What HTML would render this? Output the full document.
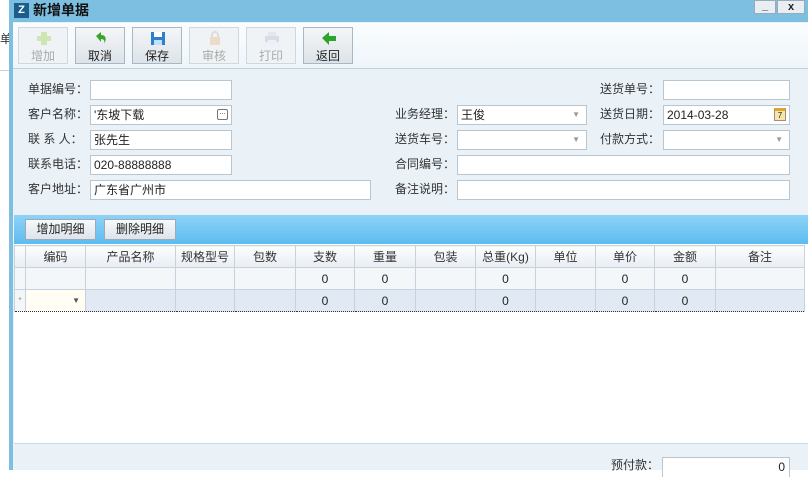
<!DOCTYPE html>
<html><head><meta charset="utf-8"><style>
*{box-sizing:border-box;margin:0;padding:0}
body{width:808px;height:470px;overflow:hidden;background:#fff;font-family:"Liberation Sans","Noto Sans CJK SC",sans-serif;font-size:12px;color:#222;position:relative}
.a{position:absolute}
.win{left:9px;top:0;width:799px;height:470px;background:#7dbfe0}
.title{left:14px;top:0;height:22px;font-weight:bold;font-size:14px;color:#111;line-height:18px}
.body{left:13px;top:22px;width:795px;height:448px;background:#eaf2f8}
.tb{left:13px;top:23px;width:795px;height:46px;background:linear-gradient(#fafdff,#eef5fa);border-bottom:1px solid #b9d3e4}
.btn{top:27px;width:50px;height:37px;border:1px solid #aab8c4;background:linear-gradient(#f4f6f8,#dde3e8);text-align:center;font-size:12px;padding-top:19px}
.dis{color:#aaa;border-color:#d0d8de;background:#f0f3f5}
.ic{position:absolute;left:17px;top:3px;width:16px;height:15px}
.lb{font-size:12px;color:#333;line-height:19px}
.in{height:20px;background:#fff;border:1px solid #b8c6d2;font-size:12px;line-height:18px;padding-left:3px}
.dd::after{content:"▼";position:absolute;right:6px;top:0;font-size:8px;color:#999}
.gt{left:14px;top:215px;width:794px;height:29px;background:linear-gradient(#8fd2f7,#5cbcef)}
.gb{top:219px;height:21px;border:1px solid #9ab;background:linear-gradient(#f7f9fb,#dde4ea);font-size:12px;text-align:center;line-height:19px}
.grid{left:14px;top:244px;width:794px;height:199px;background:#fff}
table{border-collapse:collapse;position:absolute;left:14px;top:245px}
td{border:1px solid #c8d2dc;height:22px;text-align:center;font-size:12px;padding:0}
tr.h td{background:linear-gradient(#fdfdfe,#e8edf2);height:22px;color:#333}
tr.r1 td{background:#f4f7fa}
tr.r2 td{background:#e1eaf4;border-top:1px dotted #333;border-bottom:1px dotted #333}
</style></head><body>
<div class="a" style="left:0;top:30px;font-size:12px;color:#333">单</div>
<div class="a" style="left:0;top:70px;width:9px;height:1px;background:#ccc"></div>
<div class="a win"></div>
<div class="a" style="left:14px;top:3px;width:15px;height:15px;background:#1d5d8e;color:#fff;font-size:11px;font-weight:bold;line-height:15px;text-align:center">Z</div>
<div class="a title" style="left:33px;top:1px">新增单据</div>
<div class="a" style="left:754px;top:0;width:22px;height:14px;background:#e8eef2;border:1px solid #9ab;font-size:11px;text-align:center;line-height:10px;font-weight:bold">_</div>
<div class="a" style="left:777px;top:0;width:28px;height:14px;background:#e8eef2;border:1px solid #9ab;font-size:11px;text-align:center;line-height:12px;font-weight:bold">x</div>
<div class="a body"></div>
<div class="a tb"></div>
<div class="a btn dis" style="left:18px"><svg class="ic" viewBox="0 0 16 15"><path d="M5 1h6v4h4v5h-4v4H5v-4H1V5h4z" fill="#cde6b4"/></svg>增加</div>
<div class="a btn" style="left:75px"><svg class="ic" viewBox="0 0 16 15"><path d="M3 5l5-4v3c5 0 6 4 3 9 1-3 0-5-3-5v3z" fill="#3aa52a"/></svg>取消</div>
<div class="a btn" style="left:132px"><svg class="ic" viewBox="0 0 16 15"><rect x="1" y="1" width="14" height="13" fill="#2f7fcf"/><rect x="4" y="1" width="8" height="5" fill="#fff"/><rect x="4" y="9" width="8" height="5" fill="#bfe0f5"/></svg>保存</div>
<div class="a btn dis" style="left:189px"><svg class="ic" viewBox="0 0 16 15"><rect x="3" y="6" width="10" height="8" fill="#eadcc8"/><path d="M5 6V4a3 3 0 016 0v2" stroke="#ddd" fill="none" stroke-width="2"/></svg>审核</div>
<div class="a btn dis" style="left:246px"><svg class="ic" viewBox="0 0 16 15"><rect x="4" y="1" width="8" height="4" fill="#e4e8ec"/><rect x="1" y="5" width="14" height="6" fill="#d8dde2"/><rect x="4" y="9" width="8" height="5" fill="#eef"/></svg>打印</div>
<div class="a btn" style="left:303px"><svg class="ic" viewBox="0 0 16 15"><path d="M1 7l7-6v4h7v5H8v4z" fill="#2ea52a"/></svg>返回</div>

<div class="a lb" style="left:28px;top:80px">单据编号：</div>
<div class="a in" style="left:90px;top:80px;width:142px"></div>
<div class="a lb" style="left:28px;top:105px">客户名称：</div>
<div class="a in" style="left:90px;top:105px;width:142px">'东坡下载<span style="position:absolute;right:3px;top:3px;width:11px;height:11px;border:1px solid #777;border-radius:2px;font-size:7px;line-height:6px;text-align:center">...</span></div>
<div class="a lb" style="left:28px;top:130px">联 系 人：</div>
<div class="a in" style="left:90px;top:130px;width:142px">张先生</div>
<div class="a lb" style="left:28px;top:155px">联系电话：</div>
<div class="a in" style="left:90px;top:155px;width:142px">020-88888888</div>
<div class="a lb" style="left:28px;top:180px">客户地址：</div>
<div class="a in" style="left:90px;top:180px;width:281px">广东省广州市</div>

<div class="a lb" style="left:395px;top:105px">业务经理：</div>
<div class="a in dd" style="left:457px;top:105px;width:130px">王俊</div>
<div class="a lb" style="left:395px;top:130px">送货车号：</div>
<div class="a in dd" style="left:457px;top:130px;width:130px"></div>
<div class="a lb" style="left:395px;top:155px">合同编号：</div>
<div class="a in" style="left:457px;top:155px;width:333px"></div>
<div class="a lb" style="left:395px;top:180px">备注说明：</div>
<div class="a in" style="left:457px;top:180px;width:333px"></div>

<div class="a lb" style="left:600px;top:80px">送货单号：</div>
<div class="a in" style="left:663px;top:80px;width:127px"></div>
<div class="a lb" style="left:600px;top:105px">送货日期：</div>
<div class="a in" style="left:663px;top:105px;width:127px">2014-03-28<span style="position:absolute;right:3px;top:2px;width:12px;height:13px;background:#f3e6a8;border:1px solid #a88;border-top:3px solid #e2a431;font-size:8px;line-height:9px;text-align:center">7</span></div>
<div class="a lb" style="left:600px;top:130px">付款方式：</div>
<div class="a in dd" style="left:663px;top:130px;width:127px"></div>

<div class="a gt"></div>
<div class="a gb" style="left:25px;width:71px">增加明细</div>
<div class="a gb" style="left:104px;width:72px">删除明细</div>
<div class="a grid"></div>
<table>
<colgroup><col style="width:11px"><col style="width:60px"><col style="width:90px"><col style="width:59px"><col style="width:61px"><col style="width:59px"><col style="width:61px"><col style="width:60px"><col style="width:60px"><col style="width:60px"><col style="width:59px"><col style="width:61px"><col style="width:89px"></colgroup>
<tr class="h"><td></td><td>编码</td><td>产品名称</td><td>规格型号</td><td>包数</td><td>支数</td><td>重量</td><td>包装</td><td>总重(Kg)</td><td>单位</td><td>单价</td><td>金额</td><td>备注</td></tr>
<tr class="r1"><td></td><td></td><td></td><td></td><td></td><td>0</td><td>0</td><td></td><td>0</td><td></td><td>0</td><td>0</td><td></td></tr>
<tr class="r2"><td style="background:#f4f7fa;font-size:8px;color:#888">*</td><td style="background:#fffdf4;text-align:right;font-size:8px;color:#555;padding-right:5px">▼</td><td></td><td></td><td></td><td>0</td><td>0</td><td></td><td>0</td><td></td><td>0</td><td>0</td><td></td></tr>
</table>
<div class="a" style="left:14px;top:443px;width:794px;height:1px;background:#c8d8e4"></div>
<div class="a lb" style="left:611px;top:456px">预付款：</div>
<div class="a in" style="left:662px;top:457px;width:128px;text-align:right;padding-right:4px;border-bottom:none">0</div>
</body></html>
